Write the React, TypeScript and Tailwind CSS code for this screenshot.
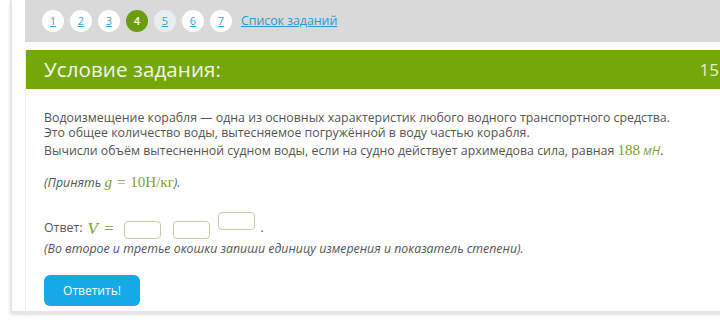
import React from "react";

const nums = ["1", "2", "3", "4", "5", "6", "7"];

function Box({ sup = false }: { sup?: boolean }) {
  return (
    <div
      className={
        "shrink-0 w-[37px] min-w-[37px] h-[18px] rounded-[4px] border border-[#c9cba6] bg-white " +
        (sup ? "mb-[9px]" : "")
      }
    />
  );
}

export default function App() {
  return (
    <div className="w-[720px] h-[332px] bg-white overflow-hidden font-['Open_Sans',sans-serif] text-[#555]">
      <div className="ml-[10px] w-[760px] h-[313px] border-l-2 border-b-2 border-[#e6e6e6] rounded-bl-[3px] shadow-[0_2px_3px_rgba(0,0,0,0.12)] pl-[13px] bg-white">
        {/* Nav */}
        <div className="h-[42px] bg-[#d9d9d9] flex items-center pl-[17px]">
          <div className="flex items-center gap-[6px]">
            {nums.map((n) => {
              const active = n === "4";
              const visited = n === "5";
              return (
                <span
                  key={n}
                  className={
                    "w-[22px] h-[22px] rounded-full flex items-center justify-center text-[11px] " +
                    (active
                      ? "bg-[#6a9c0c] text-white font-semibold"
                      : visited
                      ? "bg-[#e8eef0] text-[#3aa3d8] underline"
                      : "bg-white text-[#3aa3d8] underline")
                  }
                >
                  {n}
                </span>
              );
            })}
          </div>
          <span className="ml-[9px] text-[12.5px] text-[#2a9ad6] underline tracking-[-0.1px]">
            Список заданий
          </span>
        </div>
        <div className="h-[8px] bg-[#fbfbfb]" />
        {/* Task */}
        <div className="border-l border-[#ececec] h-[263px]">
          <div className="h-[39px] bg-[#74a70a] flex items-center justify-between pl-[18px] pr-[51px]">
            <span className="text-[20.5px] text-[#f3f8e6] leading-none tracking-[0.1px]">
              Условие задания:
            </span>
            <span className="text-[17px] text-[#e4f3bf] leading-none">15</span>
          </div>
          <div className="pl-[18px] pt-[21px] text-[12.35px]">
            <div className="leading-[15px]">
              Водоизмещение корабля — одна из основных характеристик любого водного транспортного средства.
            </div>
            <div className="leading-[15px]">
              Это общее количество воды, вытесняемое погружённой в воду частью корабля.
            </div>
            <div className="leading-[20px]">
              Вычисли объём вытесненной судном воды, если на судно действует архимедова сила, равная{" "}
              <span className="font-['Liberation_Serif',serif] text-[15px] text-[#7aa234]">188</span>{" "}
              <span className="italic text-[#7aa234]">мН</span>.
            </div>
            <div className="leading-[20px] mt-[11px] italic">
              (Принять{" "}
              <span className="not-italic font-['Liberation_Serif',serif] text-[15px] text-[#7aa234]">
                <span className="italic">g</span>
                <span className="mx-[5px]">=</span>10Н/кг
              </span>
              ).
            </div>
            <div className="mt-[19px] flex items-end h-[27px]">
              <span className="mb-[1px]">Ответ:</span>
              <span className="ml-[5px] font-['Liberation_Serif',serif] text-[17px] text-[#7aa234] leading-[20px] flex">
                <span className="italic">V</span>
                <span className="ml-[6px]">=</span>
              </span>
              <div className="ml-[11px] flex items-end">
                <Box />
              </div>
              <div className="ml-[12px] flex items-end">
                <Box />
              </div>
              <div className="ml-[8px] flex items-end">
                <Box sup />
              </div>
              <span className="ml-[5px] mb-[1px]">.</span>
            </div>
            <div className="italic leading-[16px] mt-[2px]">
              (Во второе и третье окошки запиши единицу измерения и показатель степени).
            </div>
            <button className="mt-[18px] w-[96px] h-[31px] rounded-[6px] bg-[#14aae8] text-white text-[12px] flex items-center justify-center">
              Ответить!
            </button>
          </div>
        </div>
      </div>
    </div>
  );
}
